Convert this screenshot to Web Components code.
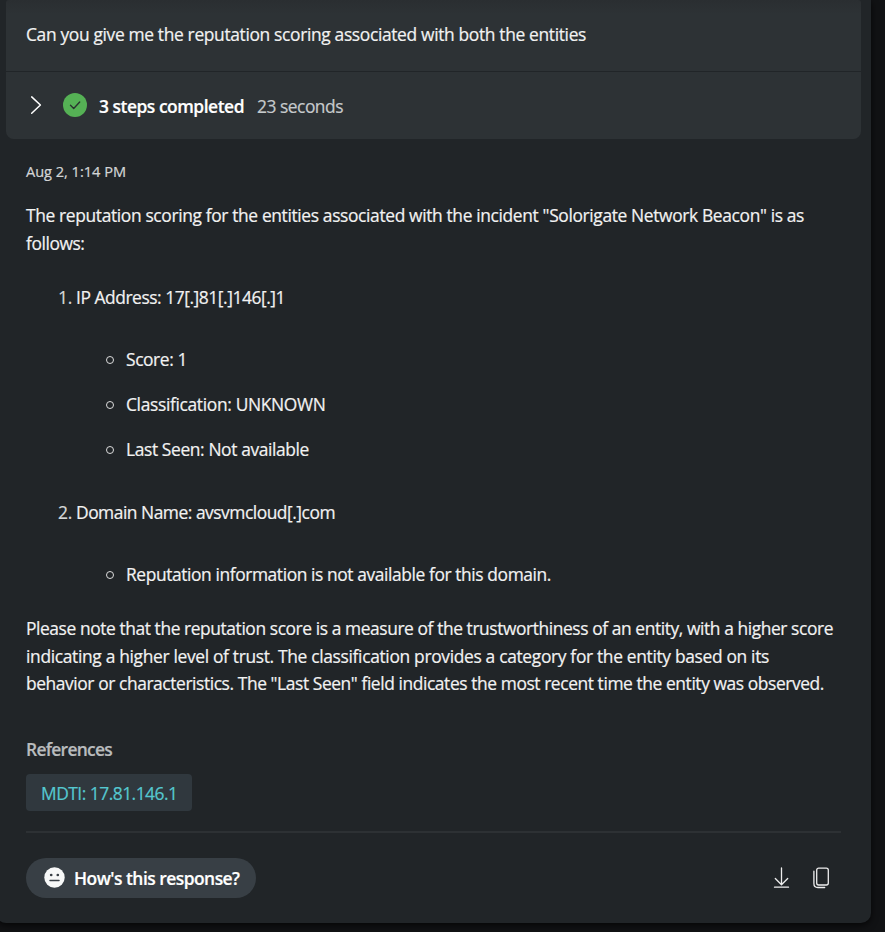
<!DOCTYPE html>
<html lang="en">
<head>
<meta charset="utf-8">
<title>Copilot response</title>
<style>
html,body{margin:0;height:932px;overflow:hidden;background:#111214}
body{font-family:"Open Sans","Noto Sans",sans-serif;font-size:17.4px;color:#f2f2f2;-webkit-text-stroke:.2px currentColor}
</style>
</head>
<body>
<chat-panel>
  <prompt-card slot="prompt">
    <text-line w="560" slot="question">Can you give me the reputation scoring associated with both the entities</text-line>
    <text-line w="145" slot="status" weight="650">3 steps completed</text-line>
    <text-line w="86" slot="time">23 seconds</text-line>
  </prompt-card>
  <chat-answer></chat-answer>
  <reference-list></reference-list>
  <response-actions></response-actions>
</chat-panel>
<script>
const make = (name, html, setup) => customElements.define(name, class extends HTMLElement {
  constructor() {
    super();
    this.attachShadow({mode: 'open'}).innerHTML = html;
  }
  connectedCallback() { if (setup) setup.call(this); }
});

// One line of text whose tracking is adjusted to the width in "w".
make('text-line', `<style>
:host{display:block;height:28px;line-height:28px;white-space:nowrap}
span{display:inline-block}
</style><span><slot></slot></span>`, function () {
  const span = this.shadowRoot.querySelector('span');
  if (this.getAttribute('weight')) span.style.fontWeight = this.getAttribute('weight');
  const n = this.textContent.length;
  const diff = Number(this.getAttribute('w')) - span.getBoundingClientRect().width;
  span.style.letterSpacing = (diff / n).toFixed(4) + 'px';
});

make('chat-panel', `<style>
:host{display:block;box-sizing:border-box;width:875px;height:923px;margin-left:-4px;padding:0 10px;
background:#212528;border-radius:0 0 10px 10px;box-shadow:0 2px 7px #000b}
</style><slot name="prompt"></slot><slot></slot>`);

make('prompt-card', `<style>
:host{display:block;height:139px;background:linear-gradient(#2a2e31,#2d3235 14px);border-radius:3px 3px 8px 8px;overflow:hidden}
.q{box-sizing:border-box;height:72px;padding:20px 20px 0;border-bottom:1px solid #212528}
.s{display:flex;height:67px;box-sizing:border-box;padding:20px 20px 0}
svg{display:block;flex:none}
.chev{margin:3px 0 0 4px}
.ok{margin:1px 12px 0 17px}
.time{margin-left:13px;color:#c6cacc}
.status{color:#fff}
</style>
<div class="q"><slot name="question"></slot></div>
<div class="s">
<svg class="chev" width="16" height="20" viewBox="0 0 16 20" fill="none" stroke="#fff" stroke-width="1.5" stroke-linecap="round" stroke-linejoin="round"><path d="M1.7 1.9 10.4 10 1.7 18.2"/></svg>
<svg class="ok" width="24" height="24" viewBox="0 0 24 24"><circle cx="12" cy="12" r="12" fill="#55b155"/><path d="m7.5 12.3 3.2 3.1 6-6.4" fill="none" stroke="#2a3330" stroke-width="1.4" stroke-linecap="round" stroke-linejoin="round"/></svg>
<div class="status"><slot name="status"></slot></div>
<div class="time"><slot name="time"></slot></div>
</div>`);

make('chat-answer', `<style>
:host{display:block;padding:18px 20px 0}
.date{font-size:14.6px;color:#d3d5d6}
.p{margin-top:16px}
.end{margin-top:27px}
.end text-line{height:27.5px;line-height:27.5px}
.item{display:flex;margin:26px 0 0 32px}
.item.two{margin-top:35px}
.n{width:18px;color:#d6d8d9}
ul{list-style:none;margin:34px 0 0;padding:0 0 0 80px;display:grid;gap:17px}
li{display:flex;align-items:center}
li::before{content:"";box-sizing:border-box;width:8px;height:8px;border:1.3px solid #dcdcdc;border-radius:50%;margin-right:12px;margin-top:1px}
</style>
<text-line class="date" w="100">Aug 2, 1:14 PM</text-line>
<div class="p">
<text-line w="778">The reputation scoring for the entities associated with the incident "Solorigate Network Beacon" is as</text-line>
<text-line w="58.5">follows:</text-line>
</div>
<div class="item"><text-line class="n" w="14">1.</text-line><text-line w="209">IP Address: 17[.]81[.]146[.]1</text-line></div>
<ul>
<li><text-line w="61">Score: 1</text-line></li>
<li><text-line w="199.5">Classification: UNKNOWN</text-line></li>
<li><text-line w="183">Last Seen: Not available</text-line></li>
</ul>
<div class="item two"><text-line class="n" w="14">2.</text-line><text-line w="259">Domain Name: avsvmcloud[.]com</text-line></div>
<ul><li><text-line w="425">Reputation information is not available for this domain.</text-line></li></ul>
<div class="end">
<text-line w="807">Please note that the reputation score is a measure of the trustworthiness of an entity, with a higher score</text-line>
<text-line w="743">indicating a higher level of trust. The classification provides a category for the entity based on its</text-line>
<text-line w="798">behavior or characteristics. The "Last Seen" field indicates the most recent time the entity was observed.</text-line>
</div>`);

make('reference-list', `<style>
:host{display:block;margin:37px 20px 0;padding-bottom:20px;border-bottom:2px solid #2d3134}
.t{color:#b9bcbe}
.chip{box-sizing:border-box;display:block;width:166px;height:37px;margin-top:11px;padding:5px 15px;border-radius:4px;background:#30383e;color:#55c8d0}
</style>
<text-line class="t" w="86" weight="580">References</text-line>
<div class="chip"><text-line w="136.5">MDTI: 17.81.146.1</text-line></div>`);

make('response-actions', `<style>
:host{display:flex;align-items:center;margin:25px 20px 0;height:40px}
.pill{box-sizing:border-box;display:flex;align-items:center;width:230px;height:40px;padding-left:18px;border-radius:20px;background:#383f45;color:#fff}
.pill text-line{margin-left:9px}
svg{display:block;flex:none}
.dl{margin-left:auto}
.cp{margin:0 10px 0 20px}
</style>
<div class="pill">
<svg width="21" height="21" viewBox="0 0 21 21"><circle cx="10.5" cy="10.5" r="10.2" fill="#f7f8f8"/><circle cx="7.2" cy="8" r="1.35" fill="#383f45"/><circle cx="13.8" cy="8" r="1.35" fill="#383f45"/><path d="M6 13.5h9" stroke="#383f45" stroke-width="1.5" stroke-linecap="round"/></svg>
<text-line w="165.5" weight="650">How's this response?</text-line>
</div>
<svg class="dl" width="20" height="24" viewBox="0 0 20 24" fill="none" stroke="#eee" stroke-width="1.3" stroke-linecap="round" stroke-linejoin="round"><path d="M10.5 2v16M4.3 12.5l6.2 6.2 6.2-6.2"/><path d="M3.5 21.2h14"/></svg>
<svg class="cp" width="20" height="24" viewBox="0 0 20 24" fill="none" stroke="#eee" stroke-width="1.3" stroke-linecap="round"><rect x="5.7" y="2.2" width="11.6" height="16.8" rx="2"/><path d="M2.9 5.2v12.3q0 4 4 4h6.8"/></svg>`);
</script>
</body>
</html>
